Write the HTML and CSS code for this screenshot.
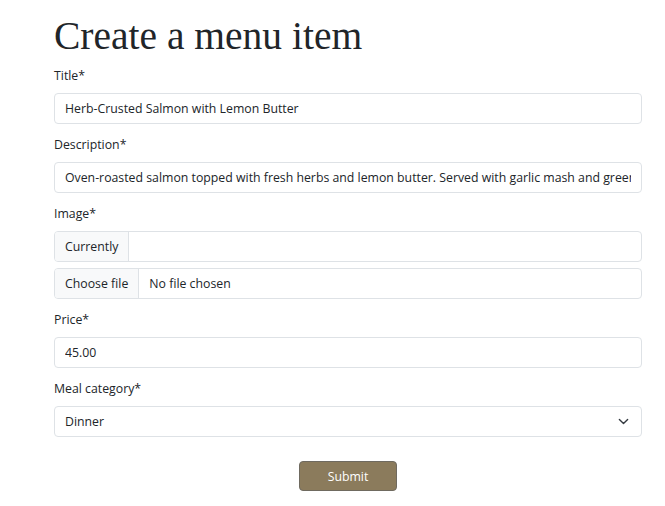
FILE: index.html
```html
<!DOCTYPE html>
<html lang="en">
<head>
<meta charset="utf-8">
<title>Create a menu item</title>
<link rel="stylesheet" href="styles.css">
</head>
<body>
<main class="page">
  <h1 class="title">Create a menu item</h1>
  <form class="form">
    <div class="field">
      <label class="label" for="title">Title*</label>
      <input class="control" id="title" type="text" value="Herb-Crusted Salmon with Lemon Butter">
    </div>
    <div class="field">
      <label class="label" for="desc">Description*</label>
      <input class="control" id="desc" type="text" value="Oven-roasted salmon topped with fresh herbs and lemon butter. Served with garlic mash and greens.">
    </div>
    <div class="field">
      <span class="label">Image*</span>
      <div class="group group-first"><span class="addon">Currently</span><span class="group-fill"></span></div>
      <div class="group"><span class="addon">Choose file</span><span class="group-fill">No file chosen</span></div>
    </div>
    <div class="field">
      <label class="label" for="price">Price*</label>
      <input class="control" id="price" type="text" value="45.00">
    </div>
    <div class="field">
      <span class="label">Meal category*</span>
      <div class="select"><span class="select-text">Dinner</span>
        <svg class="chevron" width="11" height="11" viewBox="0 0 16 16"><path d="M2 5l6 6 6-6" fill="none" stroke="#343a40" stroke-width="2" stroke-linecap="round" stroke-linejoin="round"/></svg>
      </div>
    </div>
    <div class="actions"><button class="submit" type="button">Submit</button></div>
  </form>
</main>
</body>
</html>
```
FILE: styles.css
```css
* { box-sizing: border-box; }
body {
  margin: 0;
  background: #fff;
  color: #212529;
  font-family: "Open Sans", "Noto Sans", sans-serif;
  font-size: 12.3px;
}
.page {
  width: 588px;
  margin-left: 54px;
  padding-top: 12px;
}
.title {
  margin: 0 0 6px;
  font-family: "Liberation Serif", "Times New Roman", serif;
  font-weight: normal;
  font-size: 39.5px;
  line-height: 48px;
}
.field { margin-bottom: 11px; }
.label {
  display: block;
  line-height: 20px;
  margin-bottom: 7px;
}
.control, .select, .group {
  display: block;
  width: 100%;
  height: 31px;
  border: 1px solid #dee2e6;
  border-radius: 4px;
  font: inherit;
  color: #212529;
  background: #fff;
  padding: 0 10px;
  outline: none;
}
.group {
  display: flex;
  padding: 0;
  overflow: hidden;
}
.group-first { margin-bottom: 6px; }
.addon {
  display: flex;
  align-items: center;
  padding: 0 10px;
  background: #f8f9fa;
  border-right: 1px solid #dee2e6;
}
.group-fill {
  display: flex;
  align-items: center;
  padding: 0 10px;
  flex: 1;
}
.select {
  display: flex;
  align-items: center;
  justify-content: space-between;
  padding-right: 12px;
}
.actions {
  display: flex;
  justify-content: center;
  padding-top: 13px;
}
.submit {
  width: 98px;
  height: 30px;
  background: #8b7b5c;
  color: #fff;
  border: 1px solid #6f6a60;
  border-radius: 4px;
  font: inherit;
}
```
